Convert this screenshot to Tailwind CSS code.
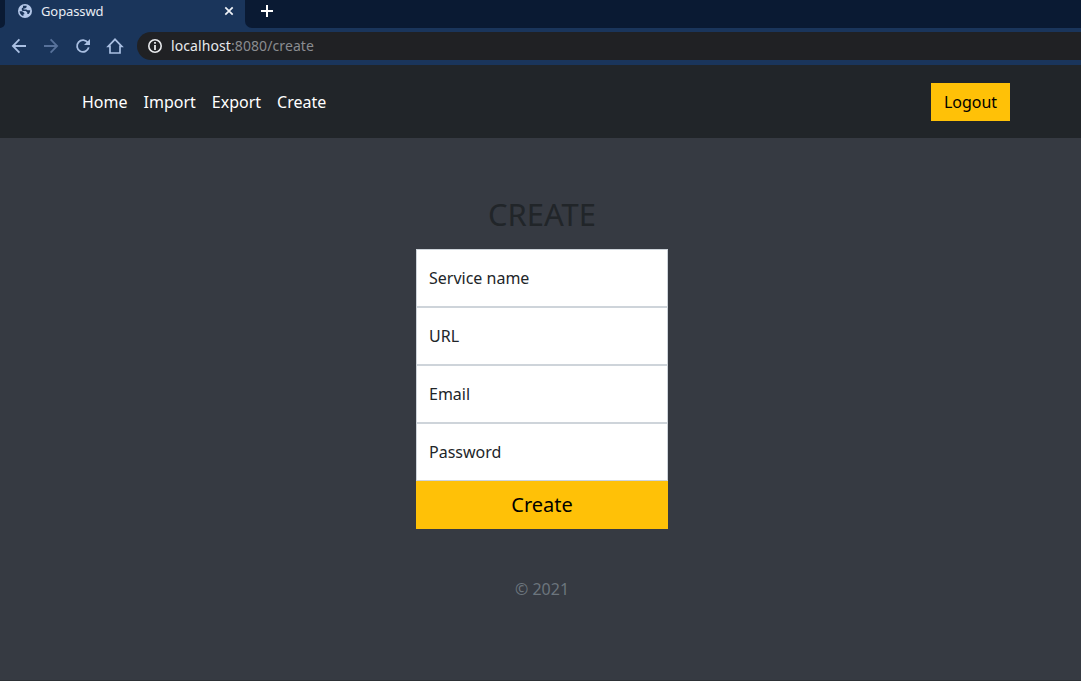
<!DOCTYPE html>
<html lang="en">
<head>
<meta charset="utf-8">
<title>Gopasswd</title>
<script src="https://cdn.jsdelivr.net/npm/@tailwindcss/browser@4"></script>
</head>
<body class="h-screen overflow-hidden flex flex-col bg-[#363a42] font-['Noto_Sans',sans-serif] text-base text-[#212529]">
  <!-- Browser tab strip -->
  <div class="h-7 shrink-0 flex bg-[#1a355b]">
    <div class="w-[5px] bg-[#0a1a33] rounded-br-[5px]"></div>
    <div class="w-60 flex items-start pl-[13px] pr-[11px] text-[13px] leading-[22px] tracking-[-0.1px] text-[#e9edf3]">
      <svg class="w-[14px] h-[14px] mt-1 mr-[9px]" viewBox="0 0 14 14"><circle cx="7" cy="7" r="7" fill="#b4c8e9"/><path d="M5 1.800L8.600 1.800V3.200L7 4.400H5.600V5.500H8.500L9.500 6.300H12.200C12.200 8 11.500 9.300 10.600 10H9.300V8.500L7.800 7H4.600L3.800 6V4.200L5 3.400ZM1.600 7.200H4.200L6.300 9V10.200H5.400V12.100C3.200 11.500 1.700 9.500 1.600 7.200Z" fill="#1a355b"/></svg>
      <span class="flex-1">Gopasswd</span>
      <svg class="w-[10px] h-[10px] mt-[6px]" viewBox="0 0 10 10" stroke="#f0f3f8" stroke-width="1.7"><path d="M1.300 1.300L8.700 8.700M8.700 1.300L1.300 8.700"/></svg>
    </div>
    <div class="flex-1 bg-[#0a1a33] rounded-bl-[7px] pl-4 pt-[5px]">
      <svg class="w-3 h-3" viewBox="0 0 12 12" stroke="#fff" stroke-width="2"><path d="M6 0V12M0 6H12"/></svg>
    </div>
  </div>
  <!-- Browser toolbar -->
  <div class="h-[37px] shrink-0 flex items-start pt-1 pl-[11px] bg-[#1a355b]">
    <div class="flex gap-4 pt-[6px] pr-[14px]">
      <svg class="w-4 h-4" viewBox="0 0 16 16" fill="none" stroke="#a9bfe2" stroke-width="1.8"><path d="M15 8H2M8.400 1.400L1.900 8L8.400 14.600"/></svg>
      <svg class="w-4 h-4" viewBox="0 0 16 16" fill="none" stroke="#57719a" stroke-width="1.8"><path d="M1 8H14M7.600 1.400L14.100 8L7.600 14.600"/></svg>
      <svg class="w-4 h-4" viewBox="0 0 16 16"><path d="M12.900 4.800A5.900 5.900 0 1 0 13.700 9.400" fill="none" stroke="#a9bfe2" stroke-width="1.800"/><path d="M15 1V7H9Z" fill="#a9bfe2"/></svg>
      <svg class="w-4 h-4 overflow-visible" viewBox="0 0 16 16" fill="none" stroke="#a9bfe2" stroke-width="1.700"><path d="M1.200 8.300H3V15H13V8.300H14.800L8 1.300Z"/></svg>
    </div>
    <div class="flex-1 h-7 flex items-center pl-[11px] rounded-l-full bg-[#202124] text-sm tracking-[0.09px] text-[#8a8c90]">
      <svg class="w-[14px] h-[14px] mr-[9px]" viewBox="0 0 14 14"><circle cx="7" cy="7" r="6.200" fill="none" stroke="#e8eaed" stroke-width="1.600"/><path d="M7 3V4.700M7 6V11" stroke="#e8eaed" stroke-width="1.800"/></svg>
      <span><span class="text-[#e8eaed]">localhost</span>:8080/create</span>
    </div>
  </div>
  <!-- Site navigation -->
  <header class="h-[73px] shrink-0 flex items-center justify-between pl-[82px] pr-[71px] pt-px bg-[#212529]">
    <nav class="flex gap-4 text-white">
      <a>Home</a><a>Import</a><a>Export</a><a>Create</a>
    </nav>
    <button class="w-[79px] h-[38px] bg-[#ffc107] text-black">Logout</button>
  </header>
  <!-- Entry form -->
  <main class="flex-1 flex flex-col items-center pt-[57px] pl-[3px] border-b border-[#2d3136]">
    <h1 class="text-[31px] leading-[38px] mb-4">CREATE</h1>
    <form class="w-[252px]">
      <div class="h-[58px] flex items-center px-3 bg-white border border-[#ced4da]">Service name</div>
      <div class="h-[58px] flex items-center px-3 bg-white border border-[#ced4da]">URL</div>
      <div class="h-[58px] flex items-center px-3 bg-white border border-[#ced4da]">Email</div>
      <div class="h-[58px] flex items-center px-3 bg-white border border-[#ced4da]">Password</div>
      <button class="block w-full h-12 bg-[#ffc107] text-xl text-black">Create</button>
    </form>
    <p class="mt-12 text-[#6c757d]">© 2021</p>
  </main>
</body>
</html>
